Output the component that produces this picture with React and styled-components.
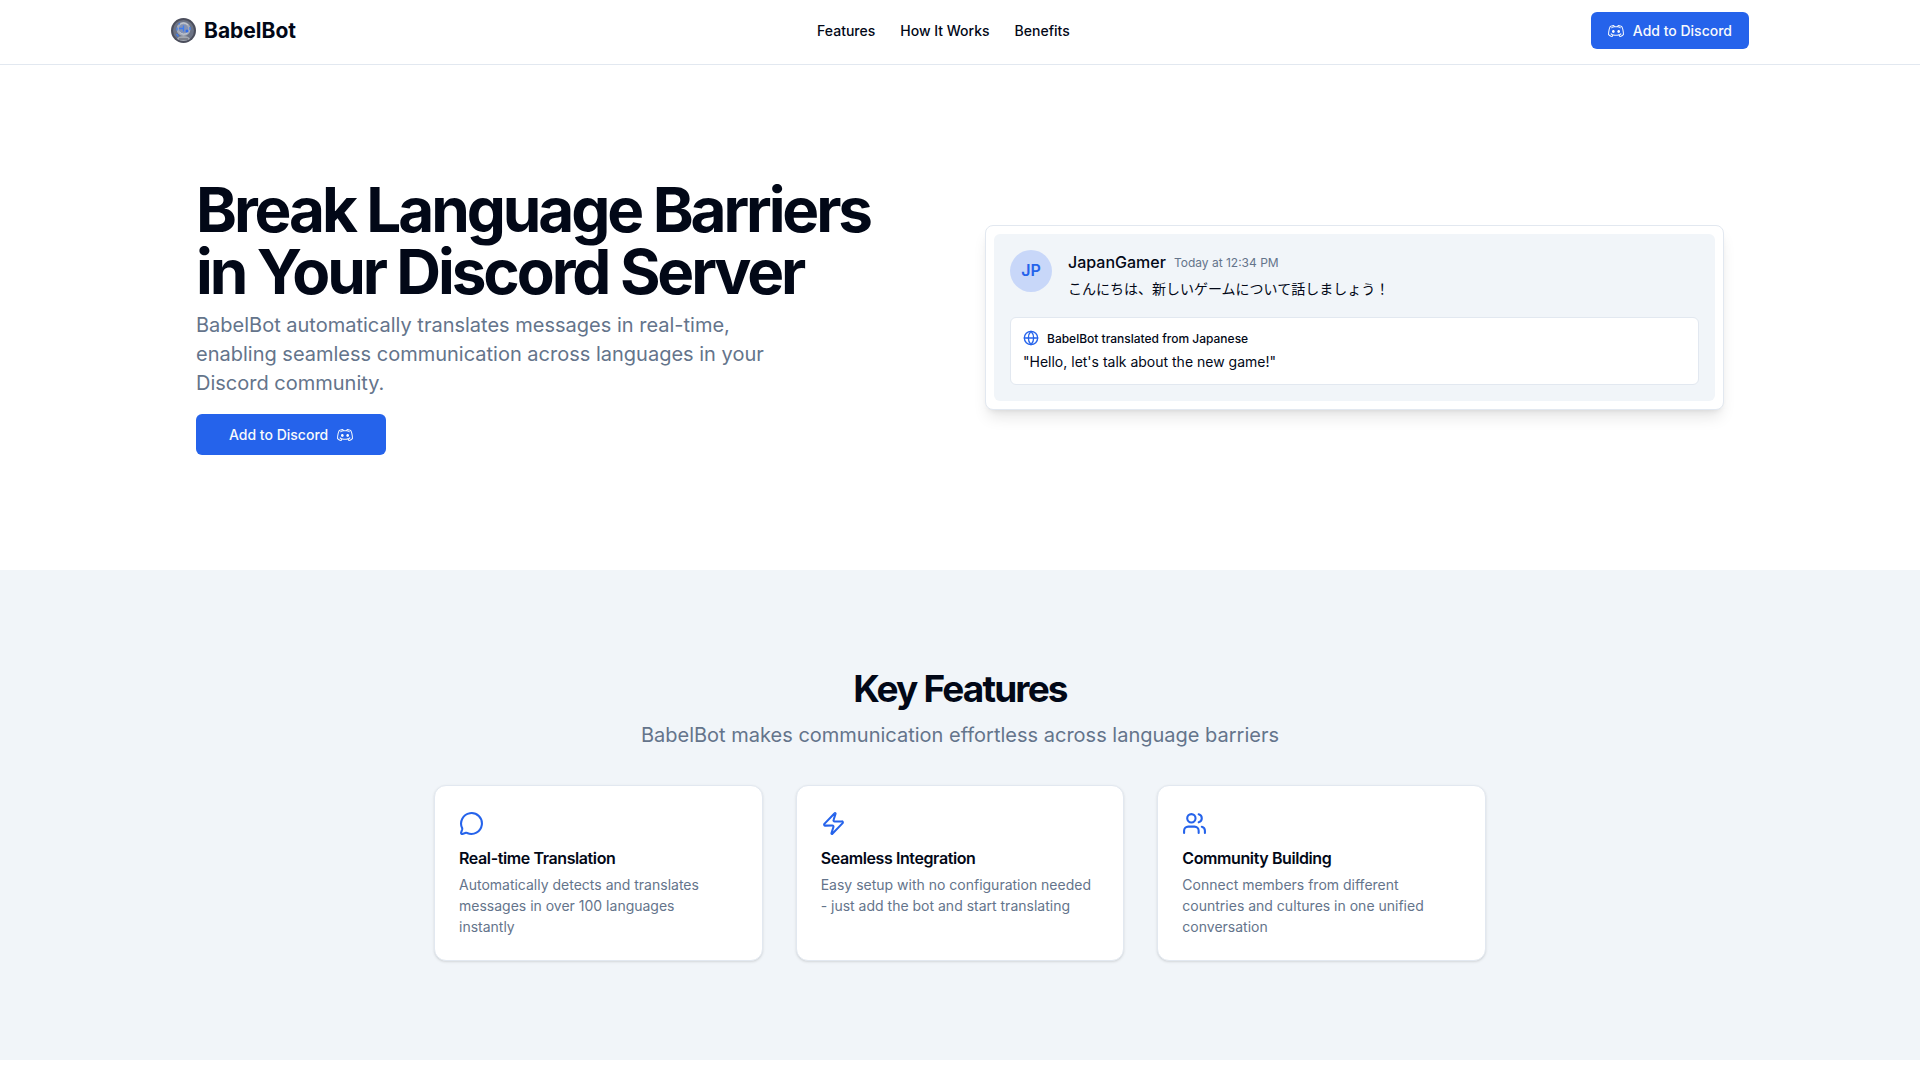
import React from "react";
import styled, { createGlobalStyle } from "styled-components";
import { Globe, MessageCircle, Users, Zap } from "lucide-react";
import { RxDiscordLogo } from "react-icons/rx";

const GlobalStyle = createGlobalStyle`
  * {
    box-sizing: border-box;
  }

  body {
    margin: 0;
    background-color: #ffffff;
    color: #020817;
    font-family: Inter, "Noto Sans CJK JP", sans-serif;
    font-size: 14px;
    line-height: 21px;
  }

  h1,
  h2,
  h3,
  p {
    margin: 0;
  }

  svg {
    display: block;
    flex-shrink: 0;
  }
`;

const Header = styled.header`
  border-bottom: 1px solid #e2e8f0;
`;

const HeaderInner = styled.div`
  display: flex;
  align-items: center;
  justify-content: space-between;
  max-width: 1578px;
  height: 64px;
  padding-bottom: 3px;
  margin: 0 auto;
`;

const Brand = styled.a`
  display: flex;
  align-items: center;
  gap: 8px;
  color: inherit;
  font-size: 21px;
  font-weight: 700;
  line-height: 29px;
  text-decoration: none;
`;

const Nav = styled.nav`
  display: flex;
  gap: 25px;
`;

const NavLink = styled.a`
  color: inherit;
  font-weight: 500;
  text-decoration: none;
`;

const Button = styled.button`
  display: inline-flex;
  align-items: center;
  justify-content: center;
  gap: 9px;
  height: ${(props) => (props.$large ? "41px" : "37px")};
  padding: 0 ${(props) => (props.$large ? "33px" : "17px")};
  border: none;
  border-radius: 6px;
  background-color: #2563eb;
  color: #f8fafc;
  font-family: inherit;
  font-size: 14px;
  font-weight: 500;
  cursor: pointer;
`;

const Hero = styled.section`
  display: grid;
  grid-template-columns: 1fr 1fr;
  align-items: center;
  gap: 50px;
  max-width: 1578px;
  margin: 0 auto;
  padding: 114px 25px 115px;
`;

const HeroText = styled.div`
  display: flex;
  flex-direction: column;
  align-items: flex-start;
`;

const HeroTitle = styled.h1`
  font-size: 62px;
  font-weight: 700;
  letter-spacing: -0.05em;
  line-height: 62px;
`;

const Lead = styled.p`
  max-width: 620px;
  color: #64748b;
  font-size: 20px;
  line-height: 29px;
`;

const HeroLead = styled(Lead)`
  margin: 8px 0 16px;
`;

const ChatCard = styled.div`
  padding: 8px;
  border: 1px solid #e2e8f0;
  border-radius: 8px;
  background-color: #ffffff;
  box-shadow: 0 10px 15px -3px rgba(0, 0, 0, 0.1),
    0 4px 6px -4px rgba(0, 0, 0, 0.1);
`;

const ChatBody = styled.div`
  display: flex;
  flex-direction: column;
  gap: 17px;
  padding: 16px;
  border-radius: 6px;
  background-color: #f1f5f9;
`;

const Message = styled.div`
  display: flex;
  align-items: flex-start;
  gap: 16px;
`;

const Avatar = styled.div`
  display: flex;
  align-items: center;
  justify-content: center;
  width: 42px;
  height: 42px;
  border-radius: 50%;
  background-color: #c8d7f9;
  color: #2563eb;
  font-size: 16px;
  font-weight: 600;
`;

const MessageHead = styled.div`
  display: flex;
  align-items: center;
  gap: 8px;
  line-height: 25px;
`;

const Author = styled.span`
  font-size: 16px;
  font-weight: 500;
`;

const Time = styled.span`
  color: #64748b;
  font-size: 12px;
`;

const MessageText = styled.p`
  padding: 3px 0 1px;
`;

const Translation = styled.div`
  padding: 10px 12px 12px;
  border: 1px solid #e2e8f0;
  border-radius: 6px;
  background-color: #ffffff;
`;

const TranslationHead = styled.div`
  display: flex;
  align-items: center;
  gap: 8px;
  margin-bottom: 2px;
  font-size: 12px;
  font-weight: 500;
`;

const Features = styled.section`
  display: flex;
  flex-direction: column;
  align-items: center;
  padding: 98px 25px 99px;
  background-color: #f1f5f9;
`;

const SectionTitle = styled.h2`
  margin-bottom: 12px;
  font-size: 37px;
  font-weight: 700;
  letter-spacing: -0.05em;
  line-height: 41px;
`;

const SectionLead = styled(Lead)`
  max-width: none;
`;

const CardGrid = styled.div`
  display: grid;
  grid-template-columns: repeat(3, 1fr);
  gap: 33px;
  width: 100%;
  max-width: 1052px;
  margin-top: 35px;
`;

const Card = styled.article`
  padding: 25px 24px 23px;
  border: 1px solid #e2e8f0;
  border-radius: 12px;
  background-color: #ffffff;
  box-shadow: 0 1px 3px rgba(0, 0, 0, 0.1), 0 1px 2px -1px rgba(0, 0, 0, 0.1);
`;

const CardTitle = styled.h3`
  margin: 10px 0 3px;
  font-size: 16px;
  font-weight: 600;
  letter-spacing: -0.025em;
  line-height: 25px;
`;

const CardText = styled.p`
  padding-right: 6px;
  color: #64748b;
`;

const features = [
  {
    icon: MessageCircle,
    title: "Real-time Translation",
    text: "Automatically detects and translates messages in over 100 languages instantly",
  },
  {
    icon: Zap,
    title: "Seamless Integration",
    text: "Easy setup with no configuration needed - just add the bot and start translating",
  },
  {
    icon: Users,
    title: "Community Building",
    text: "Connect members from different countries and cultures in one unified conversation",
  },
];

// robot head inside a dark ring
const Logo = () => (
  <svg width="25" height="25" viewBox="0 0 25 25" aria-hidden="true">
    <circle cx="12.5" cy="12.5" r="12.5" fill="#4b4e5c" />
    <circle cx="12.5" cy="12.5" r="10.5" fill="#6c7385" />
    <path d="M6 21q1-3 6.500-3t6.500 3q-6.500 4-13 0z" fill="#a3a7b0" />
    <circle cx="12.500" cy="11" r="7" fill="#a5acba" />
    <circle cx="12.500" cy="11" r="4.800" fill="#8492b4" />
    <path
      d="M8 7q4.500-4 9 0M8.500 14q4 4 8.500 0.500"
      fill="none"
      stroke="#c9ccd4"
    />
    <path
      d="M6 9.500v3M8 10.500h4M5.500 16l2 2.500M7.500 6.500l1.500-1M12.500 7.500v6M19 9v3"
      fill="none"
      stroke="#3f7df0"
      strokeWidth="1.300"
    />
    <circle cx="16" cy="13" r="1.500" fill="#2f6df0" />
    <path d="M8 21h9" stroke="#595d69" />
  </svg>
);

const App = () => {
  return (
    <>
      <GlobalStyle />
      <Header>
        <HeaderInner>
          <Brand href="#">
            <Logo />
            BabelBot
          </Brand>
          <Nav>
            <NavLink href="#features">Features</NavLink>
            <NavLink href="#how-it-works">How It Works</NavLink>
            <NavLink href="#benefits">Benefits</NavLink>
          </Nav>
          <Button type="button">
            <RxDiscordLogo size={16} />
            Add to Discord
          </Button>
        </HeaderInner>
      </Header>
      <main>
        <Hero>
          <HeroText>
            <HeroTitle>
              Break Language Barriers
              <br />
              in Your Discord Server
            </HeroTitle>
            <HeroLead>
              BabelBot automatically translates messages in real-time, enabling
              seamless communication across languages in your Discord community.
            </HeroLead>
            <Button type="button" $large>
              Add to Discord
              <RxDiscordLogo size={16} />
            </Button>
          </HeroText>
          <ChatCard>
            <ChatBody>
              <Message>
                <Avatar>JP</Avatar>
                <div>
                  <MessageHead>
                    <Author>JapanGamer</Author>
                    <Time>Today at 12:34 PM</Time>
                  </MessageHead>
                  <MessageText lang="ja">
                    こんにちは、新しいゲームについて話しましょう！
                  </MessageText>
                </div>
              </Message>
              <Translation>
                <TranslationHead>
                  <Globe size={16} color="#2563eb" />
                  BabelBot translated from Japanese
                </TranslationHead>
                <p>"Hello, let's talk about the new game!"</p>
              </Translation>
            </ChatBody>
          </ChatCard>
        </Hero>
        <Features id="features">
          <SectionTitle>Key Features</SectionTitle>
          <SectionLead>
            BabelBot makes communication effortless across language barriers
          </SectionLead>
          <CardGrid>
            {features.map(({ icon: Icon, title, text }) => {
              return (
                <Card key={title}>
                  <Icon size={25} color="#2563eb" />
                  <CardTitle>{title}</CardTitle>
                  <CardText>{text}</CardText>
                </Card>
              );
            })}
          </CardGrid>
        </Features>
      </main>
    </>
  );
};

export default App;
